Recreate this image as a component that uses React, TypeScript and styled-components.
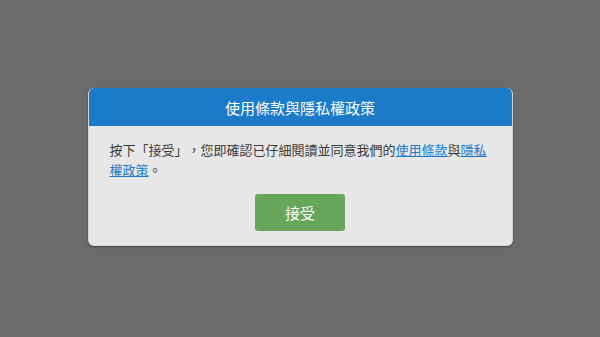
import React from "react"
import styled, { createGlobalStyle } from "styled-components"

const GlobalStyle = createGlobalStyle`
  html, body {
    margin: 0;
    padding: 0;
    background: #6b6b6b;
    font-family: "Noto Sans CJK TC", "Noto Sans", sans-serif;
  }
`

const Page = styled.div`
  height: 337px;
  display: flex;
  align-items: flex-start;
  justify-content: center;
  padding-top: 88px;
  box-sizing: border-box;
`

const Dialog = styled.div`
  width: 425px;
  border-radius: 6px;
  overflow: hidden;
  background: #e7e7e7;
  box-shadow: 0 1px 2px rgba(0, 0, 0, 0.35);
  border: 1px solid #d4d4d4;
  border-top: none;
  box-sizing: border-box;
`

const Header = styled.div`
  height: 38px;
  background: #1b7bc8;
  color: #ffffff;
  font-size: 15px;
  display: flex;
  align-items: center;
  justify-content: center;
`

const Body = styled.div`
  padding: 14px 21px 14px;
  display: flex;
  flex-direction: column;
  align-items: center;
`

const Message = styled.p`
  margin: 0;
  align-self: stretch;
  font-size: 13px;
  line-height: 20px;
  color: #3a3a3a;
  text-spacing-trim: space-all;
`

const TermsLink = styled.a`
  color: #1b7bc8;
  text-decoration: underline;
  cursor: pointer;
`

const AcceptButton = styled.button`
  margin-top: 14px;
  width: 90px;
  height: 37px;
  border: none;
  border-radius: 3px;
  background: #67a55b;
  color: #ffffff;
  font-family: inherit;
  font-size: 15px;
  cursor: pointer;
`

const App: React.FC = () => (
  <>
    <GlobalStyle />
    <Page>
      <Dialog>
        <Header>使用條款與隱私權政策</Header>
        <Body>
          <Message>
            按下「接受」，您即確認已仔細閱讀並同意我們的
            <TermsLink>使用條款</TermsLink>與<TermsLink>隱私權政策</TermsLink>。
          </Message>
          <AcceptButton>接受</AcceptButton>
        </Body>
      </Dialog>
    </Page>
  </>
)

export default App
